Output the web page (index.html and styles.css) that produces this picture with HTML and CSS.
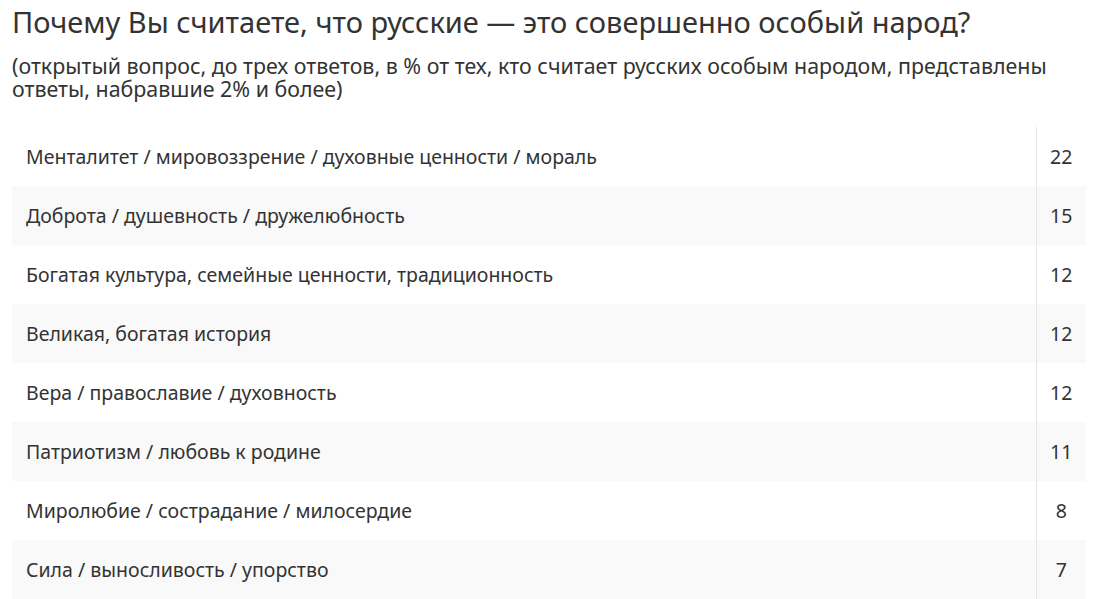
FILE: index.html
```html
<!DOCTYPE html>
<html lang="ru">
<head>
<meta charset="utf-8">
<link rel="stylesheet" href="styles.css">
</head>
<body>
<div class="page">
  <h1 class="title">Почему Вы считаете, что русские — это совершенно особый народ?</h1>
  <p class="note">(открытый вопрос, до трех ответов, в % от тех, кто считает русских особым народом, представлены ответы, набравшие 2% и более)</p>
  <table class="data">
    <tbody>
      <tr><td class="label">Менталитет / мировоззрение / духовные ценности / мораль</td><td class="num">22</td></tr>
      <tr><td class="label">Доброта / душевность / дружелюбность</td><td class="num">15</td></tr>
      <tr><td class="label">Богатая культура, семейные ценности, традиционность</td><td class="num">12</td></tr>
      <tr><td class="label">Великая, богатая история</td><td class="num">12</td></tr>
      <tr><td class="label">Вера / православие / духовность</td><td class="num">12</td></tr>
      <tr><td class="label">Патриотизм / любовь к родине</td><td class="num">11</td></tr>
      <tr><td class="label">Миролюбие / сострадание / милосердие</td><td class="num">8</td></tr>
      <tr><td class="label">Сила / выносливость / упорство</td><td class="num">7</td></tr>
    </tbody>
  </table>
</div>
</body>
</html>
```
FILE: styles.css
```css
html, body {
  margin: 0;
  padding: 0;
  background: #fff;
}
body {
  font-family: "Noto Sans", "Open Sans", sans-serif;
  color: #333;
}
.page {
  padding: 0 11px 0 12px;
}
.title {
  margin: 0;
  padding-top: 2px;
  font-size: 29px;
  font-weight: normal;
  line-height: 40px;
  color: #333;
}
.note {
  margin: 12px 0 0;
  font-size: 21.4px;
  line-height: 23px;
  color: #333;
}
.data {
  margin-top: 27px;
  width: 100%;
  border-collapse: collapse;
}
.data td {
  height: 59px;
  padding: 0 14px;
  font-size: 19.5px;
  vertical-align: middle;
}
.data tr:nth-child(even) td {
  background: #f9f9f9;
}
.data .num {
  width: 50px;
  box-sizing: border-box;
  padding: 0;
  text-align: center;
  border-left: 1px solid #e6e6e6;
}
```
